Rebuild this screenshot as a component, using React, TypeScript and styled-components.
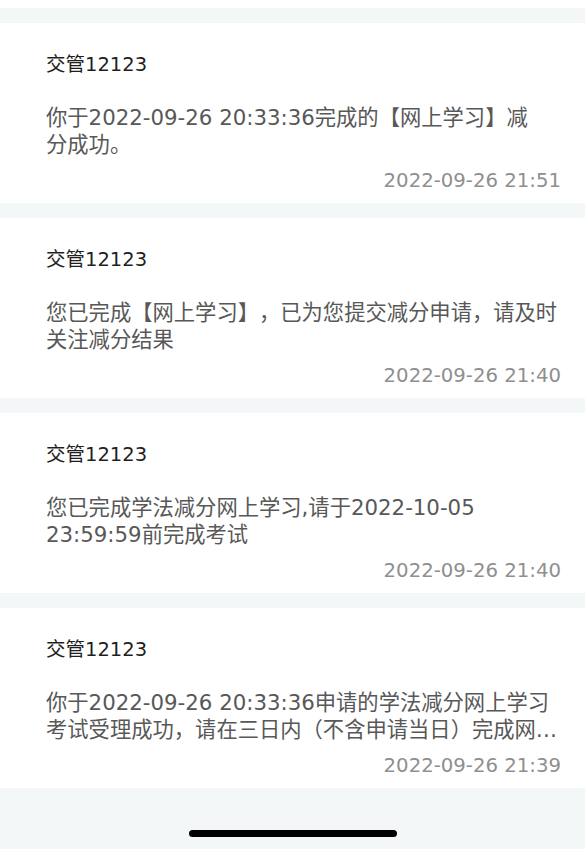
import React from 'react';
import styled, { createGlobalStyle } from 'styled-components';

const GlobalStyle = createGlobalStyle`
  html, body {
    margin: 0;
    padding: 0;
    background: #f3f7f7;
  }
  body {
    font-family: "DejaVu Sans", "Noto Sans CJK SC", sans-serif;
    -webkit-font-smoothing: antialiased;
    text-spacing-trim: space-all;
  }
`;

const Page = styled.div`
  width: 585px;
  height: 849px;
  background: #f3f7f7;
  display: flex;
  flex-direction: column;
  overflow: hidden;
  position: relative;
`;

// bottom edge of the previous message, scrolled mostly out of view
const TopEdge = styled.div`
  height: 8px;
  background: #ffffff;
  flex-shrink: 0;
`;

const List = styled.div`
  display: flex;
  flex-direction: column;
  gap: 15px;
  padding-top: 15px;
`;

const Card = styled.div`
  height: 180px;
  box-sizing: border-box;
  background: #ffffff;
  padding: 30px 24px 0 46px;
  display: flex;
  flex-direction: column;
`;

const Sender = styled.div`
  font-size: 19.5px;
  line-height: 24px;
  color: #1f1f1f;
`;

const Body = styled.div`
  margin-top: 27px;
  font-size: 21.3px;
  line-height: 27px;
  color: #585858;
  height: 54px;
  white-space: pre-line;
  text-spacing-trim: space-all;
  display: -webkit-box;
  -webkit-line-clamp: 2;
  -webkit-box-orient: vertical;
  overflow: hidden;
`;

const Time = styled.div`
  margin-top: 10px;
  font-size: 19.7px;
  line-height: 26px;
  color: #8f8f8f;
  text-align: right;
`;

const HomeBar = styled.div`
  position: absolute;
  left: 189px;
  bottom: 12px;
  width: 208px;
  height: 7px;
  border-radius: 4px;
  background: #000000;
`;

interface Message {
  sender: string;
  body: string;
  time: string;
}

const messages: Message[] = [
  {
    sender: '交管12123',
    body: '你于2022-09-26 20:33:36完成的【网上学习】减\n分成功。',
    time: '2022-09-26 21:51',
  },
  {
    sender: '交管12123',
    body: '您已完成【网上学习】，已为您提交减分申请，请及时关注减分结果',
    time: '2022-09-26 21:40',
  },
  {
    sender: '交管12123',
    body: '您已完成学法减分网上学习,请于2022-10-05 23:59:59前完成考试',
    time: '2022-09-26 21:40',
  },
  {
    sender: '交管12123',
    body: '你于2022-09-26 20:33:36申请的学法减分网上学习考试受理成功，请在三日内（不含申请当日）完成网上学习考试，逾期未完成的，本次申请作废。',
    time: '2022-09-26 21:39',
  },
];

const App = () => (
  <Page>
    <GlobalStyle />
    <TopEdge />
    <List>
      {messages.map((m, i) => (
        <Card key={i}>
          <Sender>{m.sender}</Sender>
          <Body>{m.body}</Body>
          <Time>{m.time}</Time>
        </Card>
      ))}
    </List>
    <HomeBar />
  </Page>
);

export default App;
